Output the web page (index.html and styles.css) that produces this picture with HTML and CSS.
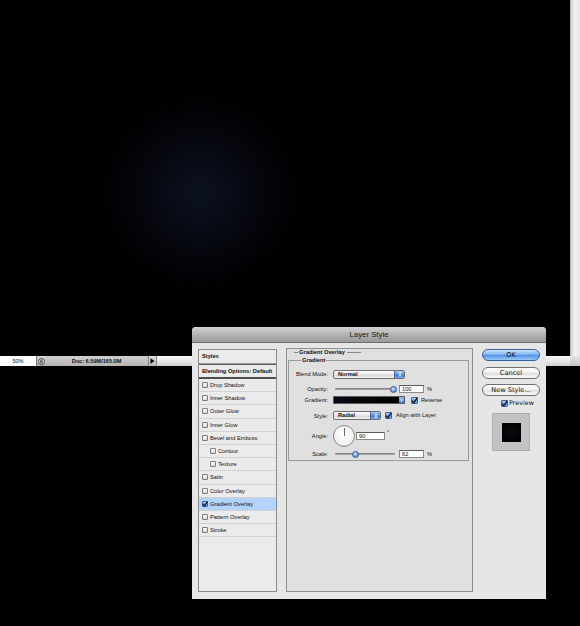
FILE: index.html
```html
<!DOCTYPE html>
<html>
<head>
<meta charset="utf-8">
<link rel="stylesheet" href="styles.css">
</head>
<body>
<div class="app">
  <div class="top">
    <div class="canvas"></div>
    <div class="vscroll"></div>
  </div>
  <div class="status">
    <div class="zoomval">50%</div>
    <div class="sicon"><svg width="7" height="7" viewBox="0 0 7 7"><circle cx="3.5" cy="3.5" r="3" fill="#ddd" stroke="#333" stroke-width="0.8"/><path d="M2 2.2h3M2 3.5h2.4M2 4.8h3" stroke="#222" stroke-width="0.7"/></svg></div>
    <div class="docinfo">Doc: 6.59M/165.0M</div>
    <div class="sarrow"><svg width="5" height="6" viewBox="0 0 5 6"><path d="M0.5 0.3L4.5 3L0.5 5.7z" fill="#000"/></svg></div>
    <div class="hscroll"></div>
    <div class="corner"></div>
  </div>
</div>

<div class="dialog">
  <div class="titlebar">Layer Style</div>
  <div class="dbody">
    <div class="leftpanel">
      <div class="lp-head">Styles</div>
      <div class="lp-blend">Blending Options: Default</div>
      <div class="lp-row"><span class="cb"></span>Drop Shadow</div>
      <div class="lp-row"><span class="cb"></span>Inner Shadow</div>
      <div class="lp-row"><span class="cb"></span>Outer Glow</div>
      <div class="lp-row"><span class="cb"></span>Inner Glow</div>
      <div class="lp-row"><span class="cb"></span>Bevel and Emboss</div>
      <div class="lp-row sub"><span class="cb"></span>Contour</div>
      <div class="lp-row sub"><span class="cb"></span>Texture</div>
      <div class="lp-row"><span class="cb"></span>Satin</div>
      <div class="lp-row"><span class="cb"></span>Color Overlay</div>
      <div class="lp-row sel"><span class="cb on"><svg width="6" height="6" viewBox="0 0 6 6"><path d="M0.8 3.2L2.4 5L5.6 0.4" fill="none" stroke="#111" stroke-width="1.1"/></svg></span>Gradient Overlay</div>
      <div class="lp-row"><span class="cb"></span>Pattern Overlay</div>
      <div class="lp-row"><span class="cb"></span>Stroke</div>
    </div>

    <div class="center">
      <div class="legend">Gradient Overlay</div>
      <fieldset class="grp">
        <legend>Gradient</legend>
        <div class="frow r1">
          <span class="lbl">Blend Mode:</span>
          <div class="select w72"><span class="stext">Normal</span><span class="pop"><svg width="4" height="6" viewBox="0 0 4 6"><path d="M0.3 2.4L2 0.4L3.7 2.4zM0.3 3.6L2 5.6L3.7 3.6z" fill="#fff"/></svg></span></div>
        </div>
        <div class="frow r2">
          <span class="lbl">Opacity:</span>
          <div class="slider"><span class="track"></span><span class="thumb t100"></span></div>
          <span class="inp">100</span><span class="unit">%</span>
        </div>
        <div class="frow r3">
          <span class="lbl">Gradient:</span>
          <div class="gradsw"><span class="gbar"></span><span class="garrow"><svg width="3" height="3" viewBox="0 0 3 3"><path d="M0 0.6h3L1.5 2.6z" fill="#fff"/></svg></span></div>
          <span class="cb on big m6"><svg width="7" height="7" viewBox="0 0 7 7"><path d="M1 3.8L2.8 5.8L6.4 0.6" fill="none" stroke="#111" stroke-width="1.2"/></svg></span>
          <span class="ctext">Reverse</span>
        </div>
        <div class="frow r4">
          <span class="lbl">Style:</span>
          <div class="select w48"><span class="stext">Radial</span><span class="pop"><svg width="4" height="6" viewBox="0 0 4 6"><path d="M0.3 2.4L2 0.4L3.7 2.4zM0.3 3.6L2 5.6L3.7 3.6z" fill="#fff"/></svg></span></div>
          <span class="cb on big m4"><svg width="7" height="7" viewBox="0 0 7 7"><path d="M1 3.8L2.8 5.8L6.4 0.6" fill="none" stroke="#111" stroke-width="1.2"/></svg></span>
          <span class="ctext">Align with Layer</span>
        </div>
        <div class="frow r5">
          <span class="lbl">Angle:</span>
          <div class="dial"><span class="hand"></span></div>
          <span class="inp a">90</span><span class="unit deg">°</span>
        </div>
        <div class="frow r6">
          <span class="lbl">Scale:</span>
          <div class="slider"><span class="track"></span><span class="thumb t62"></span></div>
          <span class="inp">62</span><span class="unit">%</span>
        </div>
      </fieldset>
    </div>

    <div class="right">
      <div class="btn ok">OK</div>
      <div class="btn">Cancel</div>
      <div class="btn">New Style...</div>
      <div class="prevrow"><span class="cb on big"><svg width="7" height="7" viewBox="0 0 7 7"><path d="M1 3.8L2.8 5.8L6.4 0.6" fill="none" stroke="#111" stroke-width="1.2"/></svg></span><span class="ptext">Preview</span></div>
      <div class="swatch"><div class="sq"></div></div>
    </div>
  </div>
</div>
</body>
</html>
```

FILE: styles.css
```css
html, body {
  margin: 0;
  padding: 0;
}
body {
  width: 580px;
  height: 626px;
  background: #000;
  overflow: hidden;
  position: relative;
  font-family: "Liberation Sans", Arial, sans-serif;
  color: #111;
}
.app {
  display: flex;
  flex-direction: column;
}
.top {
  display: flex;
  height: 356px;
}
.canvas {
  width: 570px;
  height: 356px;
  background: radial-gradient(circle 100px at 200px 193px, #0c1120 0%, #090d18 25%, #05070e 55%, #020306 80%, #000 100%);
}
.vscroll {
  width: 10px;
  height: 356px;
  background: linear-gradient(to right, #9a9a9a 0, #d4d4d4 1px, #f4f4f4 5px, #e2e2e2 100%);
}
.status {
  display: flex;
  height: 10px;
  font-size: 5.6px;
  line-height: 10px;
}
.zoomval {
  width: 36px;
  background: #fff;
  text-align: center;
  color: #111;
}
.sicon {
  width: 9px;
  background: linear-gradient(#d6d6d6, #a8a8a8);
  display: flex;
  align-items: center;
  justify-content: center;
  border-left: 1px solid #777;
  box-sizing: border-box;
}
.docinfo {
  width: 103px;
  background: linear-gradient(#cfcfcf, #b4b4b4);
  text-align: center;
  font-weight: bold;
  color: #111;
}
.sarrow {
  width: 9px;
  background: linear-gradient(#dcdcdc, #b8b8b8);
  border-left: 1px solid #888;
  border-right: 1px solid #888;
  box-sizing: border-box;
  display: flex;
  align-items: center;
  justify-content: center;
}
.hscroll {
  flex: 1;
  background: linear-gradient(#f6f6f6, #e4e4e4 60%, #cfcfcf);
}
.corner {
  width: 10px;
  background: linear-gradient(#e6e6e6, #c4c4c4);
}

/* dialog */
.dialog {
  position: absolute;
  left: 192px;
  top: 327px;
  width: 354px;
  height: 272px;
  background: #e6e6e6;
  border-radius: 4px 4px 0 0;
  overflow: hidden;
}
.titlebar {
  height: 16px;
  line-height: 16px;
  text-align: center;
  font-size: 7.8px;
  color: #1a1a1a;
  background: linear-gradient(#d2d2d2, #b4b4b4 50%, #999 100%);
  border-bottom: 1px solid #6e6e6e;
  box-sizing: border-box;
}
.dbody {
  display: flex;
  align-items: flex-start;
  padding: 6px 0 0 6px;
}
.leftpanel {
  width: 79px;
  height: 243px;
  box-sizing: border-box;
  border: 1px solid #8a8a8a;
  background: #ebebeb;
  font-size: 5.7px;
}
.lp-head {
  height: 14px;
  line-height: 13px;
  padding-left: 3px;
  font-weight: bold;
  border-bottom: 1px solid #9a9a9a;
  box-shadow: 0 1px 0 #5a5a5a;
  box-sizing: border-box;
}
.lp-blend {
  height: 14px;
  line-height: 13px;
  margin-top: 1px;
  padding-left: 3px;
  font-weight: bold;
  border-bottom: 2px solid #4e4e4e;
  box-sizing: border-box;
}
.lp-row {
  height: 13.2px;
  box-sizing: border-box;
  border-bottom: 1px solid #d2d2d2;
  display: flex;
  align-items: center;
  padding-left: 3px;
}
.lp-row.sub {
  padding-left: 11px;
}
.lp-row.sel {
  background: #b4d3fb;
}
.cb {
  width: 6px;
  height: 6px;
  box-sizing: border-box;
  border: 1px solid #7a7a7a;
  border-radius: 1px;
  background: linear-gradient(#fdfdfd, #dcdcdc);
  margin-right: 2px;
  flex: none;
  display: flex;
  align-items: center;
  justify-content: center;
  overflow: visible;
}
.cb svg {
  flex: none;
}
.cb.on {
  background: linear-gradient(#b8d6f8, #4d8de0 55%, #7cb3f0);
  border-color: #3b66a8;
}
.cb.big {
  width: 7px;
  height: 7px;
}
.cb.m6 { margin-left: 6px; margin-right: 3px; }
.cb.m4 { margin-left: 4px; margin-right: 4px; }

/* center panel */
.center {
  width: 187px;
  height: 244px;
  box-sizing: border-box;
  margin-left: 9px;
  margin-top: -1px;
  border: 1px solid #8e8e8e;
  background: #e0e0e0;
  font-size: 5.7px;
}
.legend {
  display: flex;
  align-items: center;
  height: 6px;
  line-height: 6px;
  margin-top: 0;
  font-weight: bold;
}
.legend::before {
  content: "";
  width: 4px;
  border-top: 1px solid #8a8a8a;
  margin: 0 1px 0 7px;
}
.legend::after {
  content: "";
  width: 14px;
  border-top: 1px solid #8a8a8a;
  margin-left: 2px;
}
.grp {
  margin: 2px 3px 0 1px;
  padding: 0;
  border: 1px solid #9a9a9a;
  height: 104px;
  box-sizing: border-box;
  min-inline-size: 0;
}
.grp legend {
  margin-left: 12px;
  padding: 0 1px;
  font-weight: bold;
  font-size: 5.7px;
  line-height: 6px;
  height: 6px;
}
.frow {
  display: flex;
  align-items: center;
}
.lbl {
  width: 39px;
  margin-right: 5px;
  text-align: right;
  flex: none;
}
.r1 { height: 10px; margin-top: 6px; }
.r2 { height: 10px; margin-top: 4.5px; }
.r3 { height: 9px; margin-top: 2px; }
.r4 { height: 10px; margin-top: 6px; }
.r5 { height: 22px; margin-top: 4.5px; }
.r6 { height: 8px; margin-top: 3px; }

.select {
  height: 9px;
  box-sizing: border-box;
  border: 1px solid #6f6f6f;
  border-radius: 2px;
  background: linear-gradient(#ffffff, #e6e6e6 50%, #d4d4d4 51%, #f2f2f2);
  display: flex;
  align-items: center;
  font-weight: bold;
}
.select.w72 { width: 72px; }
.select.w48 { width: 48px; }
.stext {
  flex: 1;
  padding-left: 4px;
  line-height: 7px;
}
.pop {
  width: 10px;
  height: 100%;
  background: linear-gradient(#a9cdf6, #4f8fe2 50%, #2f6fcf 51%, #78b0f0);
  border-left: 1px solid #3d66a4;
  display: flex;
  align-items: center;
  justify-content: center;
  box-sizing: border-box;
}
.slider {
  width: 60px;
  height: 8px;
  margin-left: 2px;
  position: relative;
  display: flex;
  align-items: center;
}
.track {
  width: 100%;
  height: 2px;
  background: linear-gradient(#7a7a7a, #b0b0b0);
  border-radius: 1px;
}
.thumb {
  position: absolute;
  top: 1px;
  width: 5px;
  height: 5px;
  border-radius: 50%;
  background: radial-gradient(circle at 40% 35%, #d6e8ff, #5892df 70%, #3a6db8);
  border: 0.5px solid #2f5690;
}
.thumb.t100 { left: 55px; }
.thumb.t62 { left: 17px; }
.inp {
  width: 25px;
  height: 8px;
  box-sizing: border-box;
  margin-left: 4px;
  border: 1px solid #8a8a8a;
  border-top-color: #5a5a5a;
  background: #fff;
  line-height: 6px;
  padding-left: 2px;
  flex: none;
}
.inp.a {
  width: 29px;
  margin-left: 1px;
}
.unit {
  margin-left: 3px;
}
.unit.deg {
  margin-left: 2px;
  align-self: flex-start;
  margin-top: 4px;
}
.gradsw {
  width: 72px;
  height: 8px;
  display: flex;
  box-sizing: border-box;
  border: 1px solid #5c5c5c;
}
.gbar {
  flex: 1;
  background: linear-gradient(to right, #080a12, #000);
}
.garrow {
  width: 5px;
  background: linear-gradient(#8dbdf3, #3f7fd8);
  display: flex;
  align-items: center;
  justify-content: center;
}
.ctext {
  line-height: 7px;
}
.dial {
  width: 22px;
  height: 22px;
  box-sizing: border-box;
  border: 1px solid #8a8a8a;
  border-radius: 50%;
  background: radial-gradient(circle at 50% 40%, #ffffff, #f3f3f3 60%, #d8d8d8);
  position: relative;
  flex: none;
}
.hand {
  position: absolute;
  left: 10px;
  top: 2px;
  width: 1px;
  height: 8px;
  background: #6a6a6a;
}

/* right column */
.right {
  width: 58px;
  margin-left: 9px;
  display: flex;
  flex-direction: column;
  font-size: 7px;
}
.btn {
  height: 12px;
  line-height: 10px;
  box-sizing: border-box;
  border: 1px solid #6f6f6f;
  border-radius: 6px;
  background: linear-gradient(#ffffff, #f0f0f0 50%, #dedede 51%, #fafafa);
  text-align: center;
  font-family: "DejaVu Sans", sans-serif;
  font-size: 6.6px;
  color: #111;
  margin-top: 5.5px;
}
.btn.ok {
  margin-top: 0;
  border-color: #35609e;
  background: linear-gradient(#cfe4fb, #7fb3f0 45%, #4e90e6 52%, #9ccaf8);
}
.prevrow {
  display: flex;
  align-items: center;
  height: 8px;
  margin-top: 3px;
  padding-left: 19px;
  font-family: "DejaVu Sans", sans-serif;
  font-size: 6.4px;
}
.prevrow .cb {
  margin-right: 1px;
}
.swatch {
  width: 38px;
  height: 38px;
  margin-top: 6px;
  margin-left: 10px;
  background: #c2c2c2;
  box-sizing: border-box;
  border: 1px solid #b0b0b0;
  display: flex;
  align-items: center;
  justify-content: center;
}
.sq {
  width: 19px;
  height: 19px;
  background: radial-gradient(circle, #070a14, #000 75%);
}
```
